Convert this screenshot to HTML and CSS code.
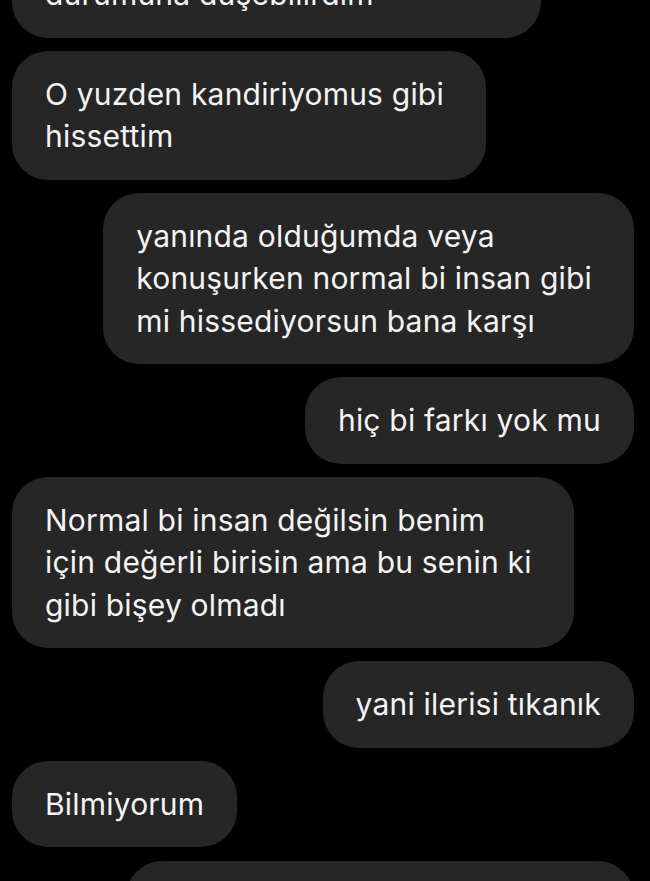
FILE: index.html
```html
<!DOCTYPE html>
<html lang="tr">
<head>
    <meta charset="UTF-8">
    <meta name="viewport" content="width=device-width, initial-scale=1.0">
    <title>Mesajlar</title>
    <link rel="stylesheet" href="styles.css">
</head>
<body>
    <div class="thread">
        <div class="bubble them multi">bende senin yerinde olsam aynı<br>durumuna düşebilirdim</div>
        <div class="bubble them multi">O yuzden kandiriyomus gibi<br>hissettim</div>
        <div class="bubble me multi">yanında olduğumda veya<br>konuşurken normal bi insan gibi<br>mi hissediyorsun bana karşı</div>
        <div class="bubble me">hiç bi farkı yok mu</div>
        <div class="bubble them multi">Normal bi insan değilsin benim<br>için değerli birisin ama bu senin ki<br>gibi bişey olmadı</div>
        <div class="bubble me">yani ilerisi tıkanık</div>
        <div class="bubble them">Bilmiyorum</div>
        <div class="bubble me multi">peki, o zaman neden bu kadar<br>uğraşıyoruz</div>
    </div>
</body>
</html>
```

FILE: styles.css
```css
html, body {
    margin: 0;
    padding: 0;
    background-color: #000;
    overflow: hidden;
}
body {
    font-family: Inter, "Noto Sans", sans-serif;
    color: #f4f4f4;
}
.thread {
    display: flex;
    flex-direction: column;
    gap: 13.5px;
    padding: 0 16px 0 12px;
    margin-top: -91px;
}
.bubble {
    background-color: #262626;
    border-radius: 36px;
    padding: 22px 33px;
    font-size: 30px;
    letter-spacing: 0.2px;
    line-height: 42.25px;
    white-space: nowrap;
    width: fit-content;
}
.bubble.multi {
    padding-right: 42px;
}
.bubble.them {
    align-self: flex-start;
}
.bubble.me {
    align-self: flex-end;
}
```
